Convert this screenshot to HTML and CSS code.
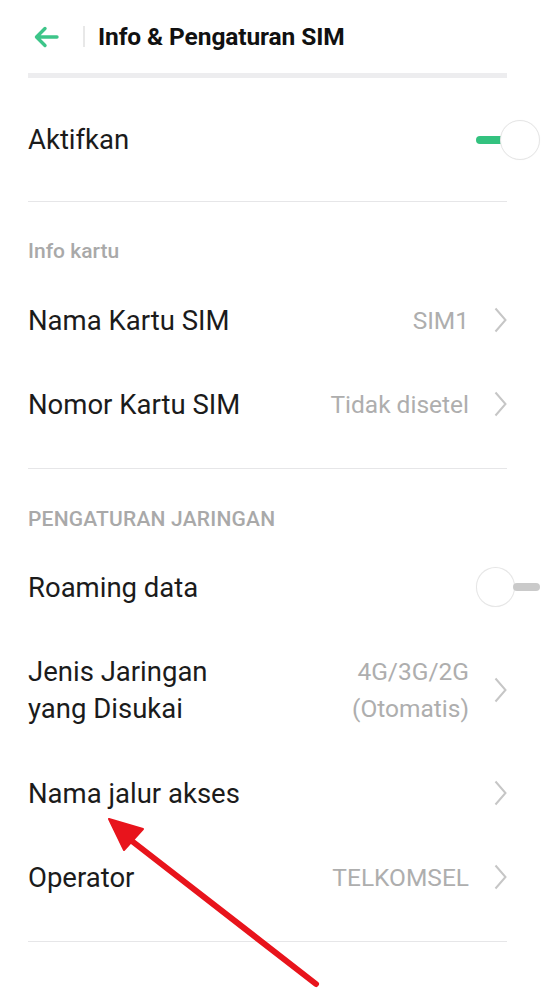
FILE: index.html
```html
<!DOCTYPE html>
<html lang="id">
<head>
<meta charset="utf-8">
<title>Info &amp; Pengaturan SIM</title>
<link rel="stylesheet" href="styles.css">
</head>
<body>
<div class="page">
  <header class="topbar">
    <svg class="back" width="26" height="22" viewBox="0 0 26 22"><path d="M24 11H4M12 2.5L3.5 11L12 19.5" fill="none" stroke="#3dc589" stroke-width="3.4" stroke-linecap="round" stroke-linejoin="round"/></svg>
    <span class="vsep"></span>
    <h1 class="title">Info &amp; Pengaturan SIM</h1>
  </header>

  <div class="row row-main">
    <span class="label">Aktifkan</span>
    <span class="toggle on"><span class="track"></span><span class="knob"></span></span>
  </div>

  <section class="group">
    <div class="group-head">Info kartu</div>
    <div class="row">
      <span class="label">Nama Kartu SIM</span>
      <span class="value">SIM1</span>
      <svg class="chev" width="13" height="26" viewBox="0 0 13 26"><path d="M1.5 1.5L11.5 13L1.5 24.5" fill="none" stroke="#c6c6c6" stroke-width="2"/></svg>
    </div>
    <div class="row">
      <span class="label">Nomor Kartu SIM</span>
      <span class="value">Tidak disetel</span>
      <svg class="chev" width="13" height="26" viewBox="0 0 13 26"><path d="M1.5 1.5L11.5 13L1.5 24.5" fill="none" stroke="#c6c6c6" stroke-width="2"/></svg>
    </div>
  </section>

  <section class="group">
    <div class="group-head caps">PENGATURAN JARINGAN</div>
    <div class="row">
      <span class="label">Roaming data</span>
      <span class="toggle off"><span class="knob"></span><span class="track"></span></span>
    </div>
    <div class="row row-tall">
      <span class="label">Jenis Jaringan<br>yang Disukai</span>
      <span class="value two">4G/3G/2G<br>(Otomatis)</span>
      <svg class="chev" width="13" height="26" viewBox="0 0 13 26"><path d="M1.5 1.5L11.5 13L1.5 24.5" fill="none" stroke="#c6c6c6" stroke-width="2"/></svg>
    </div>
    <div class="row">
      <span class="label">Nama jalur akses</span>
      <span class="value"></span>
      <svg class="chev" width="13" height="26" viewBox="0 0 13 26"><path d="M1.5 1.5L11.5 13L1.5 24.5" fill="none" stroke="#c6c6c6" stroke-width="2"/></svg>
    </div>
    <div class="row">
      <span class="label">Operator</span>
      <span class="value">TELKOMSEL</span>
      <svg class="chev" width="13" height="26" viewBox="0 0 13 26"><path d="M1.5 1.5L11.5 13L1.5 24.5" fill="none" stroke="#c6c6c6" stroke-width="2"/></svg>
    </div>
  </section>

  <svg class="annot" width="557" height="993" viewBox="0 0 557 993">
    <line x1="128" y1="838" x2="316" y2="984" stroke="#e8141c" stroke-width="6" stroke-linecap="round"/>
    <polygon points="109,819 143,829 124,850" fill="#e8141c" stroke="#e8141c" stroke-width="2" stroke-linejoin="round"/>
  </svg>
</div>
</body>
</html>
```

FILE: styles.css
```css
html, body {
  margin: 0;
  padding: 0;
  background: #ffffff;
}

.page {
  position: relative;
  width: 557px;
  min-height: 993px;
  box-sizing: border-box;
  padding: 0 50px 0 28px;
  font-family: Roboto, "Liberation Sans", sans-serif;
  color: #1b1b1b;
  overflow: hidden;
}

.topbar {
  display: flex;
  align-items: center;
  height: 73px;
  border-bottom: 5px solid #ededef;
}

.back {
  margin-left: 5px;
  flex: none;
}

.vsep {
  width: 2px;
  height: 21px;
  background: #e8e8e8;
  margin-left: 24px;
  margin-right: 13px;
}

.title {
  margin: 0;
  font-size: 24.5px;
  font-weight: 700;
  color: #111;
  letter-spacing: -0.1px;
}

.row {
  display: flex;
  align-items: center;
  height: 84px;
}

.row-main {
  height: 123px;
  border-bottom: 1px solid #e6e6e8;
}

.row-tall {
  height: 122px;
}

.label {
  flex: 1;
  font-size: 27.5px;
  line-height: 37px;
  color: #1b1b1b;
}

.value {
  font-size: 24.5px;
  line-height: 37px;
  color: #aeaeae;
  text-align: right;
  margin-right: 25px;
}

.chev {
  flex: none;
}

.group {
  border-bottom: 1px solid #e6e6e8;
  padding-bottom: 22px;
}

.group-head {
  font-size: 21px;
  font-weight: 500;
  line-height: 20px;
  color: #a9a9a9;
  padding: 39px 0 17px;
}

.group-head.caps {
  letter-spacing: 0.2px;
  padding-top: 40px;
  padding-bottom: 16px;
}

.toggle {
  display: flex;
  align-items: center;
  margin-right: -33px;
  width: 64px;
  height: 42px;
}

.toggle .track {
  width: 30px;
  height: 8px;
  border-radius: 4px;
}

.toggle .knob {
  width: 38px;
  height: 38px;
  border-radius: 50%;
  background: #fff;
  border: 1px solid #e6e6e6;
  box-shadow: 0 0 1px rgba(0, 0, 0, 0.06);
}

.toggle.on .track {
  background: #33c27f;
  margin-right: -6px;
}

.toggle.off .track {
  background: #cacaca;
  margin-left: -2px;
  width: 27px;
}

.annot {
  position: absolute;
  left: 0;
  top: 0;
  pointer-events: none;
}
```
